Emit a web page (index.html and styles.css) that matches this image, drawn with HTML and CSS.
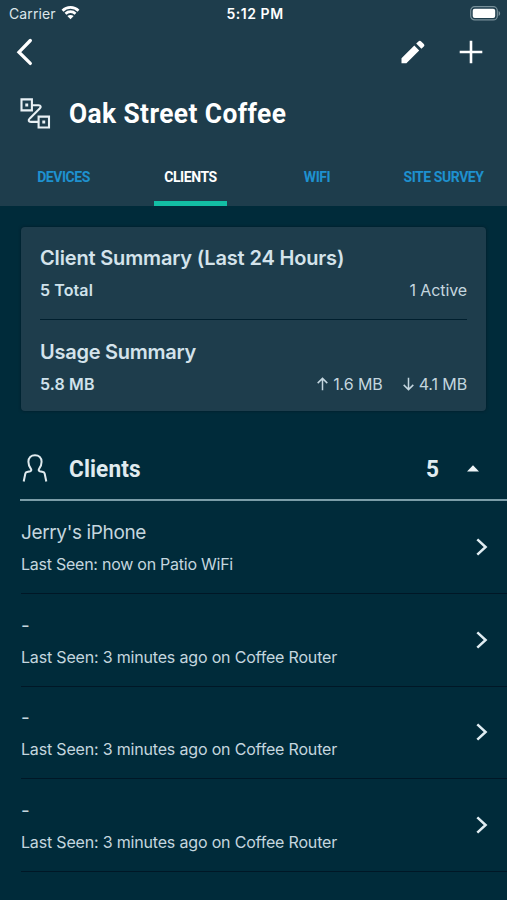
FILE: index.html
```html
<!DOCTYPE html>
<html lang="en">
<head>
<meta charset="utf-8">
<title>Oak Street Coffee</title>
<link rel="stylesheet" href="styles.css">
</head>
<body>
<header class="header">
  <div class="status">
    <div class="carrier"><span class="carrier-name">Carrier</span>
      <svg width="19" height="15" viewBox="0 0 20 15" fill="none" stroke="#fff" stroke-width="2.8"><path d="M1.6 5.6C6.2 .9 13.8 .9 18.4 5.6M4.7 8.8c3-2.900 7.600-2.900 10.600 0"/><path d="M10 14.600 6.700 11.300c1.900-1.700 4.700-1.700 6.600 0z" fill="#fff" stroke="none"/></svg>
    </div>
    <span class="time">5:12 PM</span>
    <svg class="battery" width="31" height="15" viewBox="0 0 31 15"><rect x=".7" y=".7" width="26.6" height="13.2" rx="4" fill="none" stroke="#78909a" stroke-width="1.2"/><rect x="2.7" y="2.8" width="22.500" height="9.200" rx="2" fill="#fff"/><path d="M28.6 5v5c2-.8 2-4.2 0-5z" fill="#78909a"/></svg>
  </div>
  <nav class="toolbar">
    <svg width="18" height="28" viewBox="0 0 18 28" fill="none" stroke="#fff" stroke-width="3.3" stroke-linecap="round"><path d="M14.3 2.5 3 14.2l11.3 11.2" stroke-linejoin="miter"/></svg>
    <div class="actions">
      <svg width="24" height="24" viewBox="0 0 24 24" fill="#fff"><path d="M.5 18.3v4.9h4.9L18.2 10.400 13.300 5.500zM15.2 3.600l2.200-2.200c.9-.9 1.900-.9 2.800 0L22.800 4c.8.8.8 1.800 0 2.600l-2.400 2.100z"/></svg>
      <svg width="24" height="24" viewBox="0 0 24 24" stroke="#fff" stroke-width="2.6"><path d="M12 .7v22.6M.7 12h22.6"/></svg>
    </div>
  </nav>
  <div class="site">
    <svg width="31" height="31" viewBox="0 0 31 31" fill="none" stroke="#e9f1f5" stroke-width="2.100"><path d="M1.5 1.4h10.4v11H1.5zM18.6 18.6H29v10.9H18.6z"/><path d="M12 7.2h6.5c2.4 0 2.8 1.6 1.2 3.3L9.8 20.4c-1.8 1.9-1.3 3.5 1.2 3.5h7.6"/><path d="M5.3 5.5h2.9v2.900H5.3zM22.3 22.5h2.900v2.900h-2.900z" fill="#e9f1f5" stroke="none"/></svg>
    <h1 class="title">Oak Street Coffee</h1>
  </div>
  <div class="tabs">
    <a class="tab devices"><span>DEVICES</span></a><a class="tab active"><span>CLIENTS</span></a><a class="tab wifi"><span>WIFI</span></a><a class="tab survey"><span>SITE SURVEY</span></a>
  </div>
</header>
<main>
  <section class="card">
    <div class="summary">
      <h2 class="card-title">Client Summary (Last 24 Hours)</h2>
      <div class="stats"><b class="total">5 Total</b><span class="activity">1 Active</span></div>
    </div>
    <div class="summary usage">
      <h2 class="card-title usage-title">Usage Summary</h2>
      <div class="stats"><b class="volume">5.8 MB</b>
        <div class="traffic">
          <span class="rate"><svg width="11" height="14" viewBox="0 0 11 14" fill="none" stroke="#c4d6df" stroke-width="1.5"><path d="M5.5 13.2V1.5M.7 6.1l4.8-4.7 4.8 4.7"/></svg><span>1.6 MB</span></span>
          <span class="rate"><svg width="11" height="14" viewBox="0 0 11 14" fill="none" stroke="#c4d6df" stroke-width="1.5"><path d="M5.5.8v11.7M.7 7.9l4.8 4.7 4.8-4.7"/></svg><span>4.1 MB</span></span>
        </div>
      </div>
    </div>
  </section>
  <section class="clients">
    <div class="clients-head">
      <svg width="26" height="29" viewBox="0 0 26 29" fill="none" stroke="#e0ebef" stroke-width="2" stroke-linejoin="round"><path d="M1.700 27.500 3.300 19.800c.2-1 .8-1.600 1.700-1.800l3.300-.8c1.100-.3 1.300-1.300.6-2.300C7.300 12.700 6.400 10.300 6.400 7.800 6.400 3.700 9.100 1.200 13 1.200s6.600 2.500 6.600 6.600c0 2.500-.9 4.900-2.500 7.100-.7 1-.5 2 .6 2.300l3.300.8c.9.2 1.500.8 1.700 1.800l1.600 7.700"/></svg>
      <h2 class="clients-title">Clients</h2>
      <span class="count">5</span>
      <svg width="12" height="7" viewBox="0 0 12 7" fill="#edf5f7"><path d="M0 6.500 6 .2l6 6.300z"/></svg>
    </div>
    <div class="row"><div><div class="name">Jerry's iPhone</div><div class="seen patio">Last Seen: now on Patio WiFi</div></div><svg class="chevron" viewBox="0 0 12 18"><path d="m1.300 1.300 8.300 7.700-8.300 7.700"/></svg></div>
    <div class="row"><div><div class="name">-</div><div class="seen">Last Seen: 3 minutes ago on Coffee Router</div></div><svg class="chevron" viewBox="0 0 12 18"><path d="m1.300 1.300 8.300 7.700-8.300 7.700"/></svg></div>
    <div class="row"><div><div class="name">-</div><div class="seen">Last Seen: 3 minutes ago on Coffee Router</div></div><svg class="chevron" viewBox="0 0 12 18"><path d="m1.300 1.300 8.300 7.700-8.300 7.700"/></svg></div>
    <div class="row"><div><div class="name">-</div><div class="seen">Last Seen: 3 minutes ago on Coffee Router</div></div><svg class="chevron" viewBox="0 0 12 18"><path d="m1.300 1.300 8.300 7.700-8.300 7.700"/></svg></div>
  </section>
</main>
</body>
</html>
```
FILE: styles.css
```css
* { box-sizing: border-box; }
body { margin: 0; height: 900px; overflow: hidden; background: #002b3a; color: #c4d6df; font-family: Inter, "Liberation Sans", sans-serif; }
h1, h2 { margin: 0; }
svg { display: block; flex: none; }
.header { height: 206px; background: #1e3d4c; color: #fff; }
.status { height: 27px; display: grid; grid-template-columns: 1fr auto 1fr; align-items: center; padding: 0 6px 0 9px; }
.carrier { display: flex; align-items: center; gap: 6px; font-size: 14px; color: #dce6ea; letter-spacing: .1px; }
.carrier svg { margin-top: -2px; margin-left: -1px; }
.time { font-size: 14px; font-weight: 600; letter-spacing: .55px; }
.battery { justify-self: end; }
.toolbar { height: 50px; display: flex; justify-content: space-between; align-items: center; padding: 0 24px 0 16px; }
.actions { display: flex; gap: 34px; }
.site { height: 73px; display: flex; align-items: center; gap: 18px; padding-left: 20px; }
.title, .clients-title, .count, .tab { font-family: Roboto, sans-serif; font-weight: 700; }
.title, .clients-title, .count { transform: scaleX(.94); transform-origin: left center; }
.title { font-size: 28px; letter-spacing: .44px; white-space: nowrap; }
.tabs { height: 56px; display: grid; grid-template-columns: 127px 127px 126px 127px; }
.tab { display: flex; justify-content: center; align-items: center; padding-top: 2px; font-size: 14px; letter-spacing: -.45px; color: #1e91cf; border-bottom: 5px solid transparent; white-space: nowrap; }
.tab.active { justify-self: center; width: 73px; color: #fff; border-color: #13bea4; }
.card { margin: 21px 21px 0; height: 184px; padding: 0 19px; border-radius: 4px; background: #1e3d4c; box-shadow: 0 0 3px #001c27; }
.summary { height: 93px; padding-top: 16px; border-bottom: 1px solid #001f2e; }
.usage { padding-top: 17px; border: 0; }
.card-title { font-size: 20px; line-height: 30px; font-weight: 600; letter-spacing: -.16px; color: #d4e3eb; white-space: nowrap; }
.usage-title { letter-spacing: -.25px; }
.stats { height: 34px; display: flex; justify-content: space-between; align-items: center; font-size: 16px; letter-spacing: -.1px; }
.stats b { font-weight: 600; color: #d0e2eb; letter-spacing: .1px; }
.traffic { display: flex; gap: 20px; }
.rate { display: flex; align-items: center; gap: 5px; }
.clients { padding-left: 21px; margin-top: 26px; }
.clients-head { height: 64px; display: flex; align-items: center; padding: 0 28px 0 2px; border-bottom: 2px solid #7b9da8; margin-left: -1px; color: #e0ebef; }
.clients-title { font-size: 24px; margin-left: 21px; letter-spacing: .15px; padding-top: 1px; }
.count { font-size: 24px; margin-left: auto; margin-right: 27px; padding-top: 1px; }
.row { height: 92.8px; display: flex; justify-content: space-between; align-items: center; padding-right: 19px; border-bottom: 1px solid #001726; }
.name { font-size: 19px; line-height: 32px; letter-spacing: -.37px; padding-top: 3px; }
.seen { font-size: 16px; line-height: 31px; letter-spacing: -.18px; white-space: nowrap; }
.patio { letter-spacing: -.25px; }
.chevron { width: 12px; height: 18px; fill: none; stroke: #e0edf2; stroke-width: 2.5; }
```
